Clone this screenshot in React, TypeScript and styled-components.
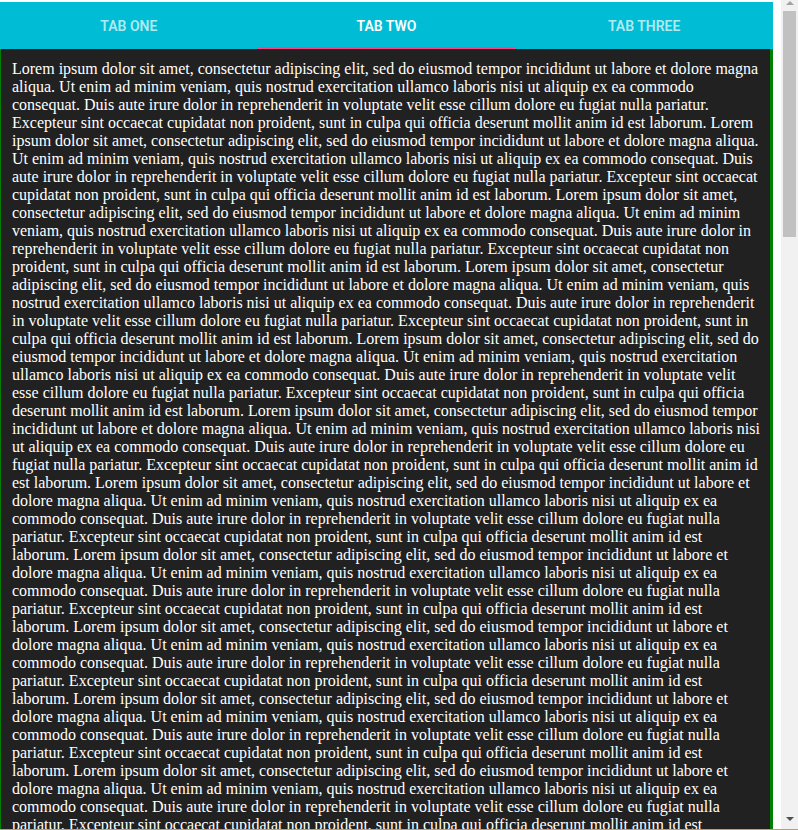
import React, { useState } from 'react';
import styled, { createGlobalStyle } from 'styled-components';

const GlobalStyle = createGlobalStyle`
  html, body {
    margin: 0;
    padding: 0;
    background: #ffffff;
    overflow: hidden;
  }
`;

const Shell = styled.div`
  display: flex;
  height: 100vh;
  box-sizing: border-box;
  border-bottom: 1px solid #c49a74;
  overflow: hidden;
`;

const Viewport = styled.div`
  flex: 1;
  min-width: 0;
  padding: 2px 8px 0 0;
  overflow: hidden;
`;

const TabBar = styled.div`
  display: flex;
  background: #00bcd4;
  height: 47px;
`;

const Tab = styled.button<{ $active?: boolean }>`
  flex: 1;
  position: relative;
  border: none;
  background: transparent;
  padding: 0;
  cursor: pointer;
  font-family: Roboto, 'Liberation Sans', sans-serif;
  font-size: 14px;
  font-weight: 600;
  text-transform: uppercase;
  color: ${props => (props.$active ? '#ffffff' : 'rgba(255, 255, 255, 0.7)')};

  &::after {
    content: '';
    position: absolute;
    left: 0;
    right: 0;
    bottom: 0;
    height: 2px;
    background: ${props => (props.$active ? '#ff4081' : 'transparent')};
  }
`;

const Panel = styled.div`
  background: #212121;
  border-left: 1px solid #008000;
  border-right: 3px solid #008000;
  padding: 11px 10px 10px 11px;
  color: #ffffff;
  font-family: 'Liberation Serif', 'Times New Roman', serif;
  font-size: 16px;
  line-height: 18px;
`;

/* fake page scrollbar, the headless browser draws none */
const ScrollTrack = styled.div`
  width: 17px;
  flex-shrink: 0;
  display: flex;
  flex-direction: column;
  background: #f1f1f1;
`;

const ArrowButton = styled.div<{ $down?: boolean }>`
  height: ${props => (props.$down ? '21px' : '11px')};
  display: flex;
  justify-content: center;
  align-items: ${props => (props.$down ? 'center' : 'flex-start')};
  padding-top: ${props => (props.$down ? '0' : '1px')};
  box-sizing: border-box;
`;

const Arrow = styled.span<{ $down?: boolean }>`
  width: 0;
  height: 0;
  border-left: 4px solid transparent;
  border-right: 4px solid transparent;
  ${props =>
    props.$down
      ? 'border-top: 4px solid #505050;'
      : 'border-bottom: 4px solid #a3a3a3;'}
`;

const Thumb = styled.div`
  margin: 0 2px;
  height: 226px;
  background: #c1c1c1;
`;

const TrackRest = styled.div`
  flex: 1;
`;

const LOREM =
  'Lorem ipsum dolor sit amet, consectetur adipiscing elit, sed do eiusmod tempor incididunt ut labore et dolore magna aliqua. Ut enim ad minim veniam, quis nostrud exercitation ullamco laboris nisi ut aliquip ex ea commodo consequat. Duis aute irure dolor in reprehenderit in voluptate velit esse cillum dolore eu fugiat nulla pariatur. Excepteur sint occaecat cupidatat non proident, sunt in culpa qui officia deserunt mollit anim id est laborum.';

const tabs = ['Tab One', 'Tab Two', 'Tab Three'];

export default function App() {
  const [active, setActive] = useState(1);
  const text = Array.from({ length: 16 }, () => LOREM).join(' ');

  return (
    <>
      <GlobalStyle />
      <Shell>
        <Viewport>
          <TabBar>
            {tabs.map((label, i) => (
              <Tab key={label} $active={i === active} onClick={() => setActive(i)}>
                {label}
              </Tab>
            ))}
          </TabBar>
          <Panel>{text}</Panel>
        </Viewport>
        <ScrollTrack>
          <ArrowButton>
            <Arrow />
          </ArrowButton>
          <Thumb />
          <TrackRest />
          <ArrowButton $down>
            <Arrow $down />
          </ArrowButton>
        </ScrollTrack>
      </Shell>
    </>
  );
}
